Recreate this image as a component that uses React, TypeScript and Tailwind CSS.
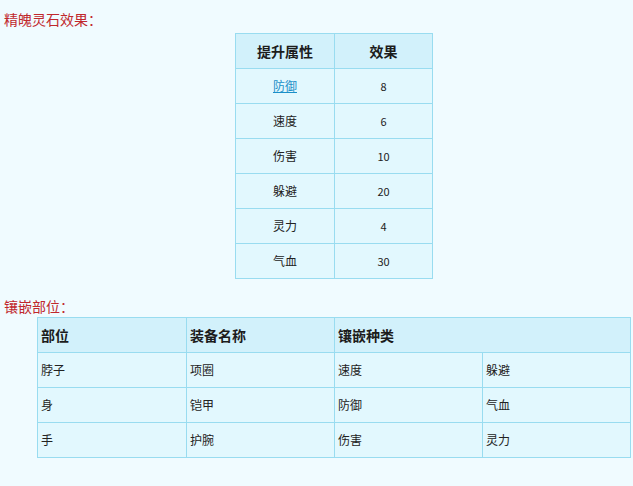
import React from "react";

const font = { fontFamily: '"Noto Sans CJK SC", "Liberation Sans", sans-serif' };

export default function App() {
  const rows1: [string, string][] = [
    ["防御", "8"],
    ["速度", "6"],
    ["伤害", "10"],
    ["躲避", "20"],
    ["灵力", "4"],
    ["气血", "30"],
  ];
  const rows2: [string, string, string, string][] = [
    ["脖子", "项圈", "速度", "躲避"],
    ["身", "铠甲", "防御", "气血"],
    ["手", "护腕", "伤害", "灵力"],
  ];
  const td = "border border-[#99dcf0] bg-[#e2f8fe] h-[35px] p-0";
  const th = "border border-[#99dcf0] bg-[#d2f1fb] h-[35px] p-0 font-bold text-[14px] text-[#1c1c1c]";
  return (
    <div className="w-[633px] h-[486px] bg-[#f0fbff] overflow-hidden text-[#222]" style={font}>
      <div className="pt-[10px] pl-[4px] text-[14px] leading-[18px] text-[#c0282d]">精魄灵石效果：</div>
      <div className="pt-[5px] pl-[235px]">
        <table className="border-collapse table-fixed w-[197px]">
          <colgroup>
            <col className="w-[99px]" />
            <col className="w-[98px]" />
          </colgroup>
          <thead>
            <tr>
              <th className={th}>提升属性</th>
              <th className={th}>效果</th>
            </tr>
          </thead>
          <tbody>
            {rows1.map(([a, b], i) => (
              <tr key={a}>
                <td className={`${td} text-center text-[12px]`}>
                  {i === 0 ? (
                    <span className="text-[#1a8fc8] underline">{a}</span>
                  ) : (
                    a
                  )}
                </td>
                <td className={`${td} text-center text-[11px]`}>{b}</td>
              </tr>
            ))}
          </tbody>
        </table>
      </div>
      <div className="pt-[18px] pl-[4px] text-[14px] leading-[18px] text-[#c0282d]">镶嵌部位：</div>
      <div className="pt-[2px] pl-[37px]">
        <table className="border-collapse table-fixed w-[593px]">
          <colgroup>
            <col className="w-[149px]" />
            <col className="w-[148px]" />
            <col className="w-[148px]" />
            <col className="w-[148px]" />
          </colgroup>
          <thead>
            <tr>
              <th className={`${th} text-left pl-[3px]`}>部位</th>
              <th className={`${th} text-left pl-[3px]`}>装备名称</th>
              <th className={`${th} text-left pl-[3px]`} colSpan={2}>
                镶嵌种类
              </th>
            </tr>
          </thead>
          <tbody>
            {rows2.map((r) => (
              <tr key={r[0]}>
                {r.map((c, j) => (
                  <td key={j} className={`${td} text-left pl-[3px] text-[12px]`}>
                    {c}
                  </td>
                ))}
              </tr>
            ))}
          </tbody>
        </table>
      </div>
    </div>
  );
}
